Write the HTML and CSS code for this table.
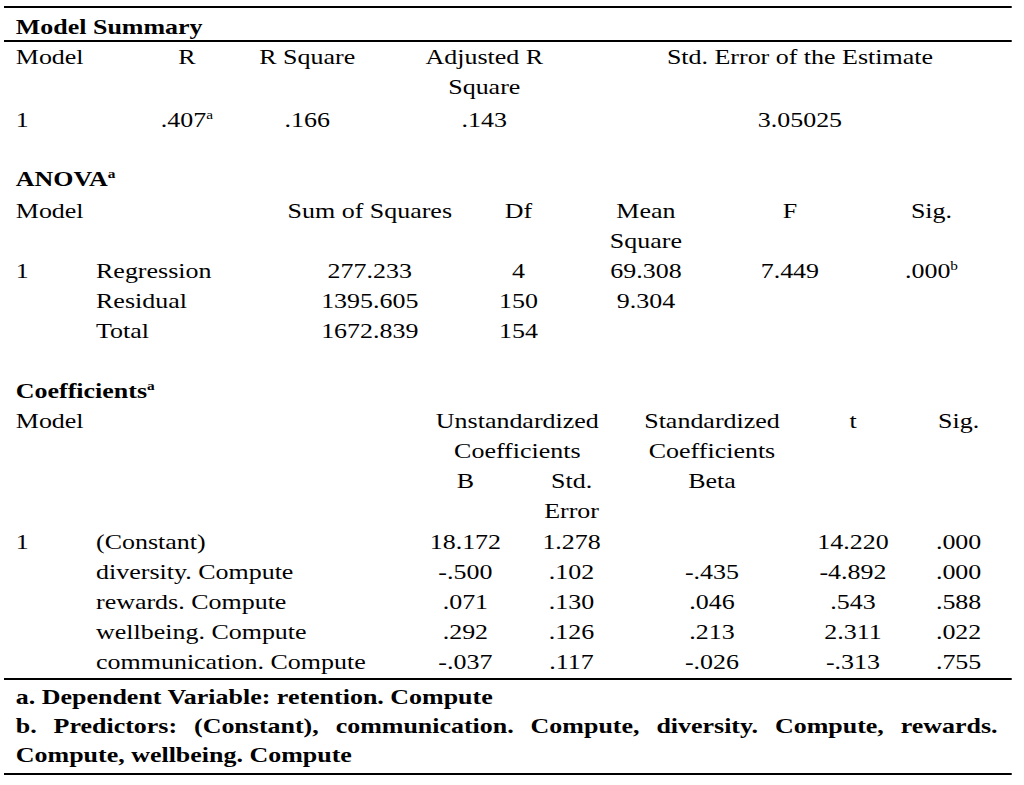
FILE: index.html
```html
<!DOCTYPE html>
<html lang="en">
<head>
<meta charset="utf-8">
<title>Regression output</title>
<link rel="stylesheet" href="styles.css">
</head>
<body>
<div class="page">
  <section class="summary">
    <div class="title title-first">Model Summary</div>
    <div class="grid sum-grid head">
      <div class="cell left">Model</div>
      <div class="cell">R</div>
      <div class="cell">R Square</div>
      <div class="cell">Adjusted R<br>Square</div>
      <div class="cell">Std. Error of the Estimate</div>
    </div>
    <div class="grid sum-grid data first-data">
      <div class="cell left">1</div>
      <div class="cell">.407<sup>a</sup></div>
      <div class="cell">.166</div>
      <div class="cell">.143</div>
      <div class="cell">3.05025</div>
    </div>
  </section>

  <section class="anova">
    <div class="title">ANOVA<sup>a</sup></div>
    <div class="grid an-grid head">
      <div class="cell left">Model</div>
      <div class="cell"></div>
      <div class="cell">Sum of Squares</div>
      <div class="cell">Df</div>
      <div class="cell">Mean<br>Square</div>
      <div class="cell">F</div>
      <div class="cell">Sig.</div>
    </div>
    <div class="grid an-grid data">
      <div class="cell left">1</div>
      <div class="cell lab">Regression</div>
      <div class="cell">277.233</div>
      <div class="cell">4</div>
      <div class="cell">69.308</div>
      <div class="cell">7.449</div>
      <div class="cell">.000<sup>b</sup></div>
    </div>
    <div class="grid an-grid data">
      <div class="cell left"></div>
      <div class="cell lab">Residual</div>
      <div class="cell">1395.605</div>
      <div class="cell">150</div>
      <div class="cell">9.304</div>
      <div class="cell"></div>
      <div class="cell"></div>
    </div>
    <div class="grid an-grid data">
      <div class="cell left"></div>
      <div class="cell lab">Total</div>
      <div class="cell">1672.839</div>
      <div class="cell">154</div>
      <div class="cell"></div>
      <div class="cell"></div>
      <div class="cell"></div>
    </div>
  </section>

  <section class="coef">
    <div class="title">Coefficients<sup>a</sup></div>
    <div class="grid co-grid head co-head1">
      <div class="cell left">Model</div>
      <div class="cell"></div>
      <div class="cell span2">Unstandardized<br>Coefficients</div>
      <div class="cell">Standardized<br>Coefficients</div>
      <div class="cell">t</div>
      <div class="cell">Sig.</div>
    </div>
    <div class="grid co-grid head">
      <div class="cell left"></div>
      <div class="cell"></div>
      <div class="cell">B</div>
      <div class="cell">Std.<br>Error</div>
      <div class="cell">Beta</div>
      <div class="cell"></div>
      <div class="cell"></div>
    </div>
    <div class="grid co-grid data first-data-co">
      <div class="cell left">1</div>
      <div class="cell lab">(Constant)</div>
      <div class="cell">18.172</div>
      <div class="cell">1.278</div>
      <div class="cell"></div>
      <div class="cell">14.220</div>
      <div class="cell">.000</div>
    </div>
    <div class="grid co-grid data">
      <div class="cell left"></div>
      <div class="cell lab">diversity. Compute</div>
      <div class="cell">-.500</div>
      <div class="cell">.102</div>
      <div class="cell">-.435</div>
      <div class="cell">-4.892</div>
      <div class="cell">.000</div>
    </div>
    <div class="grid co-grid data">
      <div class="cell left"></div>
      <div class="cell lab">rewards. Compute</div>
      <div class="cell">.071</div>
      <div class="cell">.130</div>
      <div class="cell">.046</div>
      <div class="cell">.543</div>
      <div class="cell">.588</div>
    </div>
    <div class="grid co-grid data">
      <div class="cell left"></div>
      <div class="cell lab">wellbeing. Compute</div>
      <div class="cell">.292</div>
      <div class="cell">.126</div>
      <div class="cell">.213</div>
      <div class="cell">2.311</div>
      <div class="cell">.022</div>
    </div>
    <div class="grid co-grid data">
      <div class="cell left"></div>
      <div class="cell lab">communication. Compute</div>
      <div class="cell">-.037</div>
      <div class="cell">.117</div>
      <div class="cell">-.026</div>
      <div class="cell">-.313</div>
      <div class="cell">.755</div>
    </div>
  </section>

  <section class="notes">
    <p class="note">a. Dependent Variable: retention. Compute</p>
    <p class="note justify">b. Predictors: (Constant), communication. Compute, diversity. Compute, rewards. Compute, wellbeing. Compute</p>
  </section>
</div>
</body>
</html>
```

FILE: styles.css
```css
html, body {
  margin: 0;
  padding: 0;
  background: #ffffff;
}

body {
  font-family: "Liberation Serif", "Times New Roman", serif;
  font-size: 22px;
  line-height: 30px;
  color: #000000;
}

.page {
  width: 854px;
  margin: 6px 0 0 4px;
  border-top: 2px solid #000;
  transform: scaleX(1.18);
  transform-origin: 0 0;
}

.title {
  font-weight: bold;
  padding-left: 10px;
  line-height: 30px;
}

.title-first {
  padding-top: 6px;
  line-height: 26px;
  border-bottom: 2px solid #000;
}

.anova .title {
  margin-top: 29px;
}

.coef .title {
  margin-top: 30px;
}

.grid {
  display: grid;
}

.sum-grid {
  grid-template-columns: 115px 80px 124px 176px 1fr;
}

.an-grid {
  grid-template-columns: 78px 152px 160px 92px 124px 120px 120px 1fr;
}

.co-grid {
  grid-template-columns: 78px 267px 92px 88px 150px 89px 90px;
}

.cell {
  text-align: center;
  white-space: nowrap;
}

.cell.left {
  text-align: left;
  padding-left: 10px;
}

.cell.lab {
  text-align: left;
}

.span2 {
  grid-column: span 2;
}

.first-data {
  margin-top: 3px;
}

.anova .head {
  margin-top: 2px;
}

.first-data-co {
  margin-top: 1px;
}

sup {
  font-size: 13px;
  line-height: 0;
  vertical-align: 8px;
}

.notes {
  margin-top: 1px;
  border-top: 2px solid #000;
  border-bottom: 2px solid #000;
  padding: 2px 12px 4px 10px;
}

.note {
  margin: 0;
  font-weight: bold;
  line-height: 29px;
}

.justify {
  text-align: justify;
}
```
